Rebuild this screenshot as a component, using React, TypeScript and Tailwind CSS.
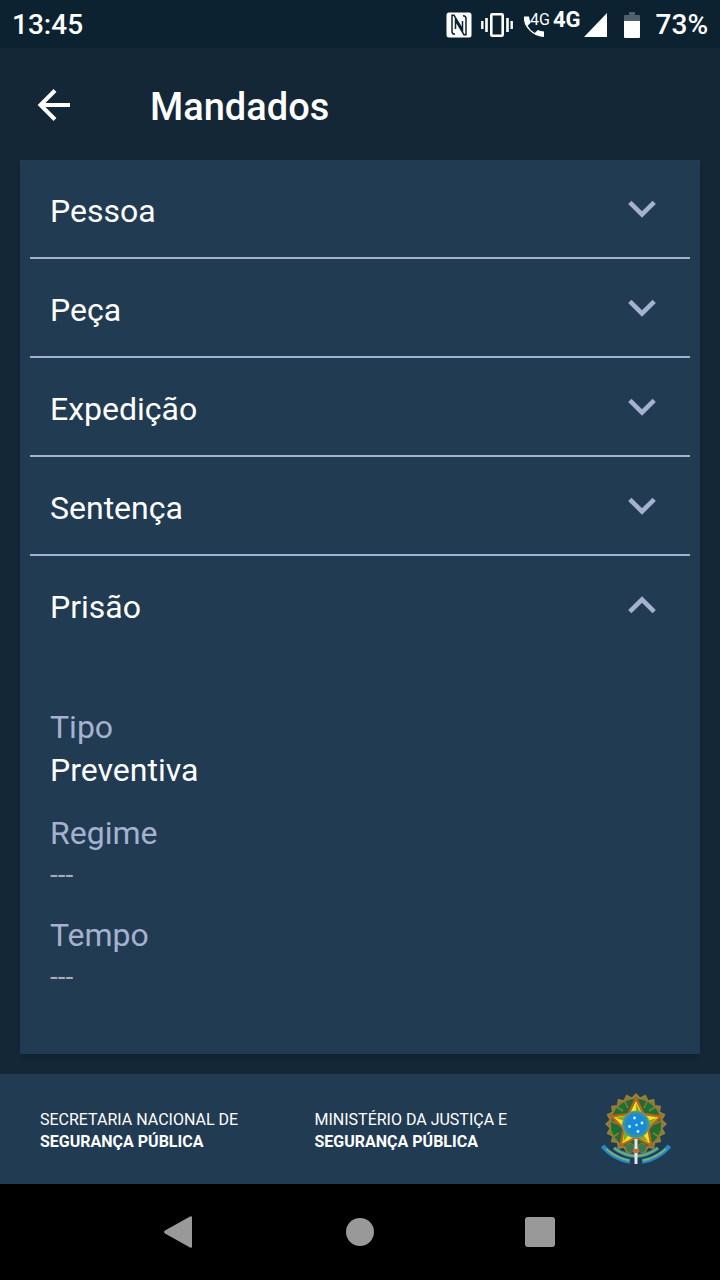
import { useState } from "react"
import { clsx } from "clsx"

type Field = { label: string; value?: string }

const sections: { title: string; fields: Field[] }[] = [
  { title: "Pessoa", fields: [] },
  { title: "Peça", fields: [] },
  { title: "Expedição", fields: [] },
  { title: "Sentença", fields: [] },
  {
    title: "Prisão",
    fields: [{ label: "Tipo", value: "Preventiva" }, { label: "Regime" }, { label: "Tempo" }],
  },
]

const agencies = [
  { top: "SECRETARIA NACIONAL DE", bottom: "SEGURANÇA PÚBLICA" },
  { top: "MINISTÉRIO DA JUSTIÇA E", bottom: "SEGURANÇA PÚBLICA" },
]

// points of a star or gear outline, starting at the top
function spikes(cx: number, cy: number, outer: number, inner: number, count: number) {
  return Array.from({ length: count * 2 }, (_, i) => {
    const r = i % 2 === 0 ? outer : inner
    const a = (Math.PI * i) / count - Math.PI / 2
    return `${(cx + r * Math.cos(a)).toFixed(2)},${(cy + r * Math.sin(a)).toFixed(2)}`
  }).join(" ")
}

function StatusBar() {
  return (
    <div className="h-12 shrink-0 flex items-center justify-between px-3 pt-[2px] bg-[#0c2230] text-[28px] leading-8 font-medium">
      <span>13:45</span>
      <div className="flex items-center">
        {/* NFC */}
        <svg width="26" height="26" viewBox="0 0 26 26">
          <rect x="0.500" y="0.500" width="25" height="25" rx="2.500" fill="#fff" />
          <path
            d="M9 22.300Q6 22.300 6 19.500V3.300H8L16.500 17.500V9M17 3.700Q20 3.700 20 6.500V22.700H18L9.500 8.500V17"
            fill="none"
            stroke="#0c2230"
            strokeWidth="1.500"
          />
        </svg>
        {/* Vibrate */}
        <svg className="ml-2" width="34" height="26" viewBox="0 0 34 26" fill="none" stroke="#fff">
          <rect x="11.300" y="2.300" width="11.400" height="21.400" rx="1" strokeWidth="2.600" />
          <path d="M6.500 6v14M27.500 6v14" strokeWidth="2.600" />
          <path d="M2.300 9v8M31.700 9v8" strokeWidth="2.400" />
        </svg>
        <div className="ml-2 flex items-start">
          <svg width="24" height="26" viewBox="0 0 24 26">
            <path
              d="M2 4.500h5q.7 4 1.600 6.300l-3 3q2.500 4.800 7.200 7.200l3-3q3 1 6.200 1.500v5.500Q14 25 7.500 18.500T2 4.500z"
              fill="#fff"
            />
          </svg>
          <span className="-ml-4 text-base leading-4 font-normal">4G</span>
        </div>
        <span className="ml-[3px] mb-[10px] text-[22px] leading-5 font-bold">4G</span>
        <svg className="ml-[3px]" width="24" height="24" viewBox="0 0 24 24">
          <path d="M23 0v24H0z" fill="#fff" />
        </svg>
        {/* Battery */}
        <svg className="ml-4" width="16" height="26" viewBox="0 0 16 26">
          <path d="M5 0h6v3h4q1 0 1 1v6H0V4q0-1 1-1h4z" fill="#4f616d" />
          <path d="M0 9h16v16q0 1-1 1H1q-1 0-1-1z" fill="#fff" />
        </svg>
        <span className="ml-4">73%</span>
      </div>
    </div>
  )
}

function Chevron({ open }: { open: boolean }) {
  return (
    <svg width="28" height="18" viewBox="0 0 28 18" fill="none" stroke="#a5b2cf" strokeWidth="4.600">
      <path d={open ? "M1.800 15.700 14 3.500l12.200 12.200" : "M1.800 2.300 14 14.500 26.200 2.300"} />
    </svg>
  )
}

function CoatOfArms() {
  return (
    <svg width="70" height="74" viewBox="11 12 70 74" role="img" aria-label="Brasão da República">
      {/* Wreath */}
      <polygon
        points={spikes(46, 44, 30, 26, 20)}
        fill="#8c7a35"
        stroke="#9a8237"
        strokeWidth="1.400"
        strokeLinejoin="round"
      />
      <circle cx="46" cy="44" r="25" fill="#27683a" />
      <g fill="none" stroke="#0f7a2c" strokeWidth="4.500">
        <path d="M28 34l7-9M23 48l4 9M64 34l-7-9M69 48l-4 9" />
      </g>
      <g fill="none" stroke="#8a7a33" strokeWidth="1.600">
        <path d="M27 27l6 4M21 41l6 3M23 57l6-4M65 27l-6 4M71 41l-6 3M69 57l-6-4M35 22l3 6M57 22l-3 6" />
      </g>
      <circle cx="40" cy="68" r="4.500" fill="#39774e" stroke="#857d3d" />
      <circle cx="52" cy="68" r="4.500" fill="#39774e" stroke="#857d3d" />
      {/* Star */}
      <polygon
        points={spikes(46, 44.500, 26, 13, 5)}
        fill="#f7e51c"
        stroke="#b8651c"
        strokeWidth="2.400"
        strokeLinejoin="round"
      />
      <path
        d="M46 23v21l5.500-9zM66.500 38 46 44.500l12 3.500zM58.500 62 46 44.500v12zM33.500 62 46 44.500l-12 3.500zM25.500 38 46 44.500l-6-9.500z"
        fill="#86a824"
      />
      <circle cx="46" cy="44.500" r="13.500" fill="#3d9299" stroke="#5aa293" strokeWidth="1" />
      <circle cx="46" cy="44.500" r="10.500" fill="#168bd8" />
      <g fill="#d9f1ff">
        <circle cx="44.500" cy="38" r="1.400" />
        <circle cx="52" cy="43" r="1.400" />
        <circle cx="46.500" cy="45" r="1.200" />
        <circle cx="39.500" cy="46.500" r="1.400" />
        <circle cx="48" cy="51.500" r="1.400" />
      </g>
      {/* Ribbon and sword */}
      <g fill="none">
        <path d="M12.500 66Q24 79 40 81.500M79.500 66Q68 79 52 81.500" stroke="#2389c5" strokeWidth="4.500" />
        <path d="M16 69Q27 78 39 80.500M76 69Q65 78 53 80.500" stroke="#83ae6b" strokeWidth="1.800" />
        <path d="M24 68Q46 84 68 68" stroke="#2389a9" strokeWidth="4" />
        <path d="M24 68Q46 84 68 68" stroke="#84a863" strokeWidth="1.800" />
      </g>
      <path d="M44.500 59h3v25h-3z" fill="#e3e7ec" />
      <path d="M43 69h6v4h-6z" fill="#c76a36" />
    </svg>
  )
}

export default function App() {
  const [openSection, setOpenSection] = useState("Prisão")

  return (
    <div className="min-h-screen flex flex-col bg-[#142737] text-white font-[Roboto,sans-serif]">
      <StatusBar />

      {/* Header */}
      <header className="h-28 shrink-0 flex items-center px-9 pt-[2px]">
        <button type="button" aria-label="Voltar">
          <svg width="36" height="36" viewBox="0 0 36 36" fill="none" stroke="#fff" strokeWidth="4">
            <path d="M34 18H5M19 3.500 4.500 18 19 32.500" />
          </svg>
        </button>
        <h1 className="ml-[78px] pt-1 text-[38px] leading-11 font-medium">Mandados</h1>
      </header>

      {/* Accordion */}
      <main className="flex-1 flex flex-col px-5 pb-5">
        <div className="flex-1 px-[10px] pb-10 bg-[#213b52] shadow-md">
          {sections.map((section) => {
            const open = section.title === openSection
            return (
              <section key={section.title} className="border-b-2 border-[#a5b2cf] last:border-b-0">
                <h2>
                  <button
                    type="button"
                    aria-expanded={open}
                    onClick={() => setOpenSection(open ? "" : section.title)}
                    className="w-full h-[97px] flex items-center justify-between pl-5 pr-[34px] text-[32px] leading-10"
                  >
                    <span className="pt-1">{section.title}</span>
                    <Chevron open={open} />
                  </button>
                </h2>
                {open && section.fields.length > 0 && (
                  <dl className="pt-[53px] px-5 flex flex-col gap-5">
                    {section.fields.map((field) => (
                      <div key={field.label}>
                        <dt className="text-[32px] leading-[43px] text-[#a5b2cf]">{field.label}</dt>
                        <dd
                          className={clsx(
                            field.value ? "text-[32px] leading-[43px]" : "text-[28px] leading-[39px] text-[#a9abaf]",
                          )}
                        >
                          {field.value ?? "---"}
                        </dd>
                      </div>
                    ))}
                  </dl>
                )}
              </section>
            )
          })}
        </div>
      </main>

      {/* Footer */}
      <footer className="h-[110px] shrink-0 flex items-center pl-10 pr-[49px] bg-[#213b52]">
        {agencies.map((agency) => (
          <p key={agency.top} className="flex-1 pt-[3px] text-base leading-[22px]">
            {agency.top}
            <br />
            <strong className="font-bold">{agency.bottom}</strong>
          </p>
        ))}
        <div className="ml-3">
          <CoatOfArms />
        </div>
      </footer>

      {/* System navigation */}
      <nav className="h-24 shrink-0 flex items-center justify-center bg-black">
        <button type="button" aria-label="Anterior" className="w-1/4 flex justify-center">
          <svg width="32" height="32" viewBox="0 0 32 32">
            <path d="M28 1.500v29q0 2-2 1L1 17.500q-2-1.500 0-3L26 .5q2-1 2 1z" fill="#999" />
          </svg>
        </button>
        <button type="button" aria-label="Início" className="w-1/4 flex justify-center">
          <span className="size-7 rounded-full bg-[#999]" />
        </button>
        <button type="button" aria-label="Recentes" className="w-1/4 flex justify-center">
          <span className="size-[30px] rounded-[3px] bg-[#999]" />
        </button>
      </nav>
    </div>
  )
}
